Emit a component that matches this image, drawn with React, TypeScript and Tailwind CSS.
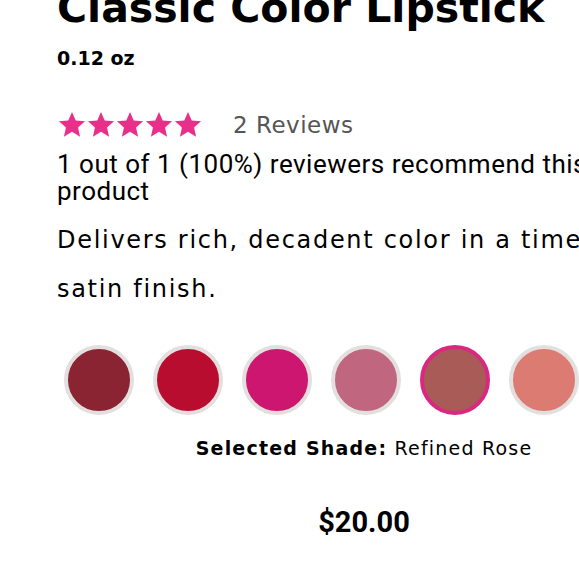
const shades = [
  { name: "Deep Berry", color: "#8a2332" },
  { name: "True Red", color: "#b90d30" },
  { name: "Fuchsia", color: "#cc166f" },
  { name: "Mauve", color: "#c0667f" },
  { name: "Refined Rose", color: "#a95c57" },
  { name: "Coral", color: "#dc7b72" },
  { name: "Nude", color: "#c98b7a" },
];

function Star() {
  return (
    <svg viewBox="0 0 24 24" className="w-[30px] h-[29px] -mx-[0.5px]" fill="#e8308a">
      <path d="M12 1.6l3.1 7.1 7.7.7-5.8 5.1 1.7 7.6L12 18.1l-6.7 4 1.7-7.6-5.8-5.1 7.7-.7z" />
    </svg>
  );
}

export default function App() {
  const selected = "Refined Rose";
  return (
    <div className="w-[579px] h-[580px] overflow-hidden bg-white text-black font-['DejaVu_Sans',sans-serif]">
      <div className="ml-[57px] w-[614px]">
        <h1 className="-mt-[16px] text-[41px] leading-[48px] font-bold whitespace-nowrap">
          Classic Color Lipstick
        </h1>
        <div className="mt-[14px] text-[19px] leading-[24px] font-bold">0.12 oz</div>
        <div className="mt-[40px] flex items-center">
          <div className="flex">
            {[0, 1, 2, 3, 4].map((i) => (
              <Star key={i} />
            ))}
          </div>
          <span className="ml-[31px] text-[23px] leading-[28px] tracking-[0.5px] text-[#555]">
            2 Reviews
          </span>
        </div>
        <p className="mt-[12px] text-[26px] leading-[27px] tracking-[0.5px] font-['Roboto',sans-serif]">
          1 out of 1 (100%) reviewers recommend this product
        </p>
        <p className="mt-[11px] text-[24px] leading-[49px] tracking-[1.7px]">
          Delivers rich, decadent color in a timeless satin finish.
        </p>
        <div className="mt-[31px] flex gap-[19px] pl-[7px]">
          {shades.map((s) => (
            <button
              key={s.name}
              aria-label={s.name}
              className={
                "w-[70px] h-[70px] shrink-0 rounded-full border-[4px] " +
                (s.name === selected ? "border-[#d8287f]" : "border-[#e4dfdf]")
              }
              style={{ backgroundColor: s.color }}
            />
          ))}
        </div>
        <p className="mt-[21px] text-center text-[19px] leading-[24px] tracking-[1.2px]">
          <span className="font-bold">Selected Shade:</span> {selected}
        </p>
        <div className="mt-[44px] text-center text-[29px] leading-[36px] font-bold font-['Roboto',sans-serif]">
          $20.00
        </div>
      </div>
    </div>
  );
}
